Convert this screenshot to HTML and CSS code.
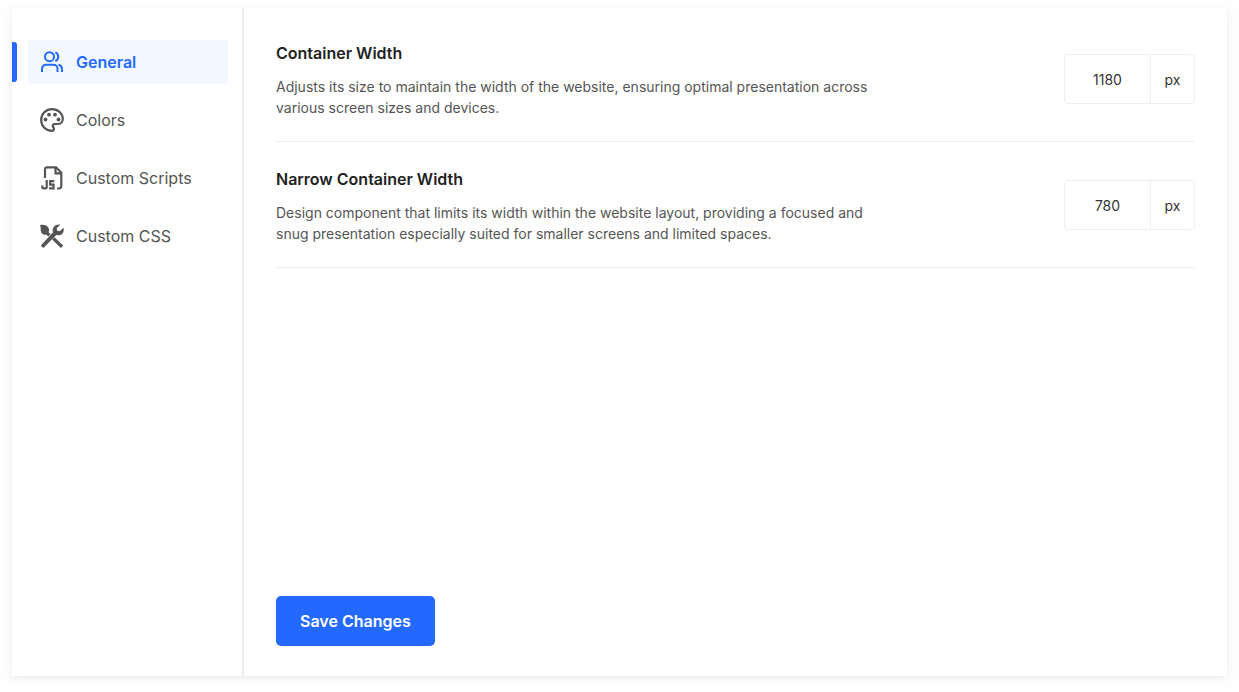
FILE: index.html
```html
<!DOCTYPE html>
<html lang="en">
<head>
<meta charset="utf-8">
<meta name="viewport" content="width=device-width, initial-scale=1">
<title>Settings</title>
<link rel="stylesheet" href="styles.css">
</head>
<body>
<div class="card">
  <nav class="sidebar" aria-label="Settings">
    <a class="nav-item active" href="#general">
      <svg class="icon" viewBox="0 0 24 24" fill="none" stroke="currentColor" stroke-width="2">
        <circle cx="9.500" cy="6.700" r="4.500"/>
        <path d="M15.300 2.400a4.600 4.600 0 0 1 0 8.600"/>
        <path d="M2 22v-3.200a4 4 0 0 1 4-4h7.500a4 4 0 0 1 4 4V22M18.500 14.800c2.200.5 3.500 2.100 3.500 4.200v3"/>
      </svg>
      General
    </a>
    <a class="nav-item" href="#colors">
      <svg class="icon" viewBox="0 0 24 24" fill="none" stroke="currentColor" stroke-width="2.200">
        <path d="M12 1.200C5.900 1.200 1.200 5.900 1.200 12S5.900 22.800 12 22.800c1.200 0 1.900-.9 1.900-2 0-.6-.2-1-.6-1.500-.3-.4-.5-.8-.5-1.300 0-1.100.9-2 2-2H18c2.800 0 4.800-2.200 4.800-5C22.800 5.400 18 1.200 12 1.200z"/>
        <g fill="currentColor" stroke="none">
          <circle cx="5.500" cy="11.500" r="1.900"/><circle cx="9" cy="6.700" r="1.900"/><circle cx="15" cy="6.700" r="1.900"/><circle cx="18.500" cy="11.500" r="1.900"/>
        </g>
      </svg>
      Colors
    </a>
    <a class="nav-item" href="#scripts">
      <svg class="icon" viewBox="0 0 24 24" fill="none" stroke="currentColor" stroke-width="2.200">
        <path d="M5 12V3.300a2 2 0 0 1 2-2h9l5.300 5.500V20a2.500 2.500 0 0 1-2.500 2.500H17"/>
        <path d="M15.500 1.300v6h6"/>
        <path d="M6.700 14v7a1.400 1.400 0 0 1-1.400 1.400H3.700a1.400 1.400 0 0 1-1.400-1.400v-1.500M14.200 15.100h-4v3.600h3.300v3.700H9"/>
      </svg>
      Custom Scripts
    </a>
    <a class="nav-item" href="#css">
      <svg class="icon" viewBox="0 0 24 24" fill="currentColor">
        <path d="M0 1c3.500-.6 7.300.2 8.600 3.100.7 1.500.5 2.900 0 4.100l1.900 1.900-2.300 2.300-2-2C4.500 11 2.700 10.500 1.600 9 0 6.800 1.400 3.600 0 1z"/>
        <path d="M14.500 13.200l8.700 8.400-2.300 2.300-8.700-8.400z"/>
        <path d="M20.200.7l-3.500 3.500.5 2.500 2.500.5 3.600-3.500c1.500 3.700-1 7.500-5 7.500-.8 0-1.400-.1-2-.3L3.300 23.900.8 21.400 13 8.300C11.500 4 15.700-.8 20.200.7z"/>
      </svg>
      Custom CSS
    </a>
  </nav>
  <main class="content">
    <form class="form">
      <div class="setting">
        <div class="info">
          <label class="title" for="container-width">Container Width</label>
          <p class="description">Adjusts its size to maintain the width of the website, ensuring optimal presentation across various screen sizes and devices.</p>
        </div>
        <div class="field">
          <input class="value" id="container-width" type="text" inputmode="numeric" value="1180">
          <span class="unit">px</span>
        </div>
      </div>
      <div class="setting">
        <div class="info">
          <label class="title" for="narrow-width">Narrow Container Width</label>
          <p class="description">Design component that limits its width within the website layout, providing a focused and snug presentation especially suited for smaller screens and limited spaces.</p>
        </div>
        <div class="field">
          <input class="value" id="narrow-width" type="text" inputmode="numeric" value="780">
          <span class="unit">px</span>
        </div>
      </div>
      <button class="save" type="submit">Save Changes</button>
    </form>
  </main>
</div>
</body>
</html>
```
FILE: styles.css
```css
* {
  box-sizing: border-box;
}

body {
  margin: 0;
  min-height: 100vh;
  padding: 8px 12px 16px;
  display: flex;
  background: #fefefe;
  font-family: Inter, "Liberation Sans", sans-serif;
  font-size: 16px;
  color: #555;
}

.card {
  flex: 1;
  display: flex;
  background: #fff;
  box-shadow: 0 2px 8px rgba(0, 0, 0, 0.08);
}

.sidebar {
  flex: none;
  width: 232px;
  padding: 32px 14px 32px 16px;
  border-right: 2px solid #ededed;
  display: flex;
  flex-direction: column;
  gap: 14px;
}

.nav-item {
  position: relative;
  height: 44px;
  padding: 0 12px;
  display: flex;
  align-items: center;
  gap: 12px;
  color: #555;
  text-decoration: none;
}

.nav-item.active {
  background: #f2f8ff;
  color: #2369ff;
  font-weight: 600;
}

.nav-item.active::before {
  content: "";
  position: absolute;
  left: -16px;
  top: 2px;
  width: 5px;
  height: 40px;
  border-radius: 0 3px 3px 0;
  background: #2369ff;
}

.icon {
  flex: none;
  width: 24px;
  height: 24px;
}

.content {
  flex: 1;
  display: flex;
  padding: 32px 32px 30px;
}

.form {
  flex: 1;
  display: flex;
  flex-direction: column;
  align-items: flex-start;
}

.setting {
  width: 100%;
  display: flex;
  align-items: center;
  justify-content: space-between;
  gap: 32px;
  padding-bottom: 23px;
  margin-bottom: 24px;
  border-bottom: 1px solid #efefef;
}

.info {
  max-width: 600px;
}

.title {
  display: block;
  line-height: 26px;
  font-weight: 600;
  color: #222;
}

.description {
  margin: 10px 0 0;
  font-size: 14px;
  line-height: 21px;
}

.field {
  flex: none;
  display: flex;
  height: 50px;
  border: 1px solid #efefef;
  border-radius: 4px;
  font-size: 14px;
  color: #333;
}

.value {
  width: 86px;
  padding: 0;
  border: 0;
  border-right: 1px solid #efefef;
  border-radius: 4px 0 0 4px;
  background: none;
  font: inherit;
  color: inherit;
  text-align: center;
}

.unit {
  width: 43px;
  display: flex;
  align-items: center;
  justify-content: center;
}

.save {
  margin-top: auto;
  height: 50px;
  padding: 0 24px;
  border: 0;
  border-radius: 5px;
  background: #2369ff;
  color: #fff;
  font: inherit;
  font-weight: 600;
}
```
